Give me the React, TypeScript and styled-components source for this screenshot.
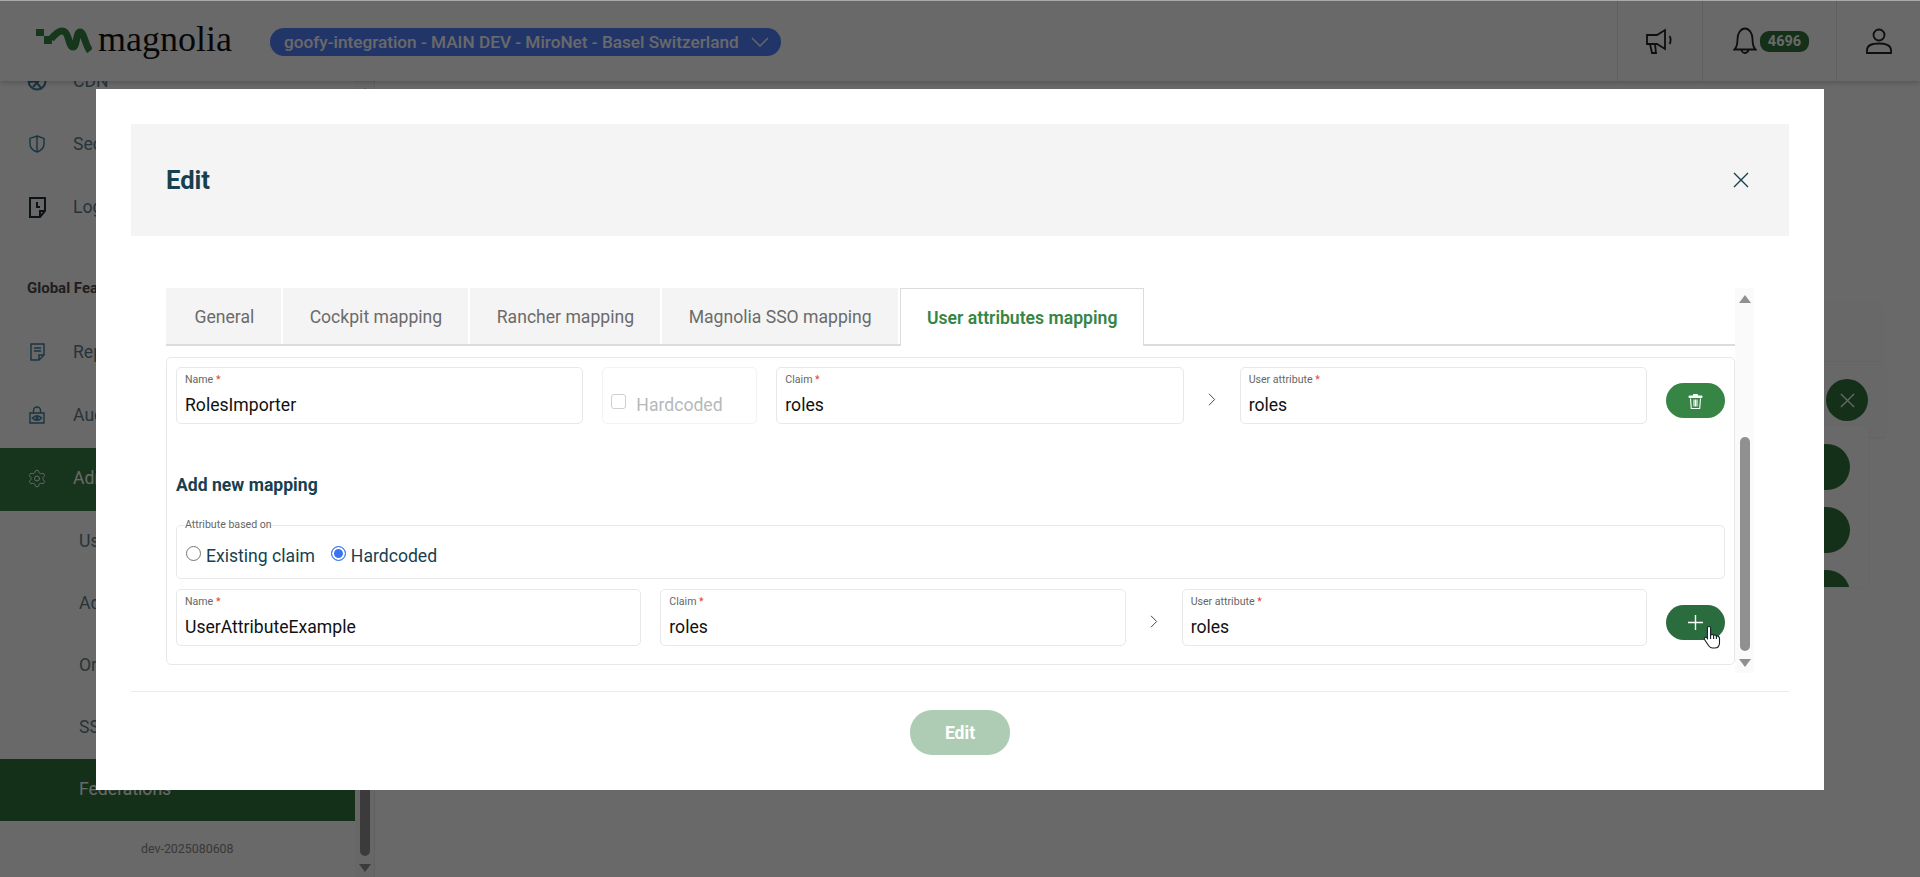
import React from 'react';
import styled, { createGlobalStyle } from 'styled-components';
import { Settings } from 'lucide-react';

const GlobalStyle = createGlobalStyle`
  html, body {
    margin: 0;
    height: 100%;
    overflow: hidden;
    background: #fff;
    font-family: Roboto, "Liberation Sans", sans-serif;
  }
  * {
    box-sizing: border-box;
  }
`;

const green = '#378545';
const backGreen = '#32763d';
const ink = '#173f4f';

// page behind the dialog
const Page = styled.div`
  height: 100vh;
  display: flex;
  flex-direction: column;
`;

const TopBar = styled.header`
  flex: 0 0 81px;
  display: flex;
  align-items: stretch;
  background: #fff;
  border-top: 1px solid #aaa;
  box-shadow: 0 2px 5px rgba(0, 0, 0, 0.18);
  position: relative;
  z-index: 2;
`;

const Logo = styled.div`
  display: flex;
  align-items: center;
  margin-left: 36px;
  gap: 6px;
  width: 197px;
`;

const LogoWord = styled.span`
  font-family: "Liberation Serif", serif;
  font-size: 36px;
  line-height: 36px;
  color: #111;
  margin-top: -5px;
`;

const ClusterPill = styled.div`
  align-self: center;
  height: 28px;
  margin-left: 37px;
  margin-top: 2px;
  padding: 0 12px 0 14px;
  width: 511px;
  display: flex;
  align-items: center;
  justify-content: space-between;
  border-radius: 14px;
  background: #5381ff;
  color: #fff;
  font-size: 17.2px;
  font-weight: 500;
  white-space: nowrap;
`;

const Spacer = styled.div`
  flex: 1;
`;

const HeaderCell = styled.div<{ $width: number }>`
  width: ${(p) => p.$width}px;
  display: flex;
  align-items: center;
  justify-content: center;
  gap: 3px;
  border-left: 1px solid #e6e6e6;
`;

const CountBadge = styled.span`
  width: 49px;
  height: 21px;
  margin-right: -3px;
  border-radius: 9px;
  background: ${backGreen};
  color: #fff;
  font-size: 14.5px;
  font-weight: 700;
  display: flex;
  align-items: center;
  justify-content: center;
`;

const Workspace = styled.div`
  flex: 1;
  min-height: 0;
  display: flex;
`;

const Sidebar = styled.aside`
  width: 375px;
  display: flex;
  border-right: 1px solid #ececec;
  background: #fff;
`;

const NavList = styled.nav`
  width: 355px;
  display: flex;
  flex-direction: column;
  justify-content: flex-end;
  overflow: hidden;
`;

const NavRow = styled.div<{ $active?: boolean; $sub?: boolean }>`
  flex: 0 0 ${(p) => (p.$sub ? 62 : 63)}px;
  display: flex;
  align-items: center;
  gap: ${(p) => (p.$sub ? 0 : 26)}px;
  padding-left: ${(p) => (p.$sub ? 79 : 27)}px;
  padding-bottom: 3px;
  font-size: 17.6px;
  white-space: nowrap;
  color: ${(p) => (p.$active ? '#fff' : '#5d7f8c')};
  background: ${(p) => (p.$active ? (p.$sub ? backGreen : '#397f45') : 'transparent')};
`;

const NavHeading = styled.div`
  flex: 0 0 82px;
  padding: 39px 0 0 27px;
  font-size: 15px;
  line-height: 18px;
  font-weight: 700;
  color: #4e4a4a;
  white-space: nowrap;
`;

const VersionTag = styled.div`
  flex: 0 0 56px;
  padding: 19px 0 0 141px;
  font-size: 12.4px;
  line-height: 18px;
  color: #8a8a8a;
`;

const IconSvg = styled.svg<{ $stroke?: number }>`
  flex: none;
  fill: none;
  stroke: currentColor;
  stroke-width: ${(p) => p.$stroke ?? 1.4};
`;

const NavIcon = styled.span<{ $tone?: string }>`
  width: 20px;
  height: 20px;
  flex: none;
  display: flex;
  align-items: center;
  justify-content: center;
  color: ${(p) => p.$tone || '#3c7f9a'};
`;

const ScrollRail = styled.div`
  flex: 0 0 19px;
  display: flex;
  flex-direction: column;
  align-items: center;
  padding-top: 7px;
  background: #fafafa;
`;

const RailArrow = styled.span<{ $down?: boolean }>`
  width: 0;
  height: 0;
  border-left: 6px solid transparent;
  border-right: 6px solid transparent;
  ${(p) => (p.$down ? 'border-top' : 'border-bottom')}: 8px solid #909090;
`;

const RailThumb = styled.span<{ $offset: number; $size: number }>`
  width: 10px;
  height: ${(p) => p.$size}px;
  margin: ${(p) => p.$offset}px 0 8px;
  border-radius: 5px;
  background: #909090;
`;

const Main = styled.main`
  flex: 1;
  min-width: 0;
  padding: 222px 38px 0 0;
  display: flex;
  flex-direction: column;
`;

const BackCard = styled.div<{ $height: number; $wide?: boolean }>`
  height: ${(p) => p.$height}px;
  margin-right: ${(p) => (p.$wide ? -3 : 0)}px;
  margin-top: ${(p) => (p.$wide ? 3 : 0)}px;
  background: #fdfdfd;
  border-bottom: 1px solid #f2f2f2;
  box-shadow: 0 0 3px rgba(0, 0, 0, 0.05);
  position: relative;
`;

const BackClose = styled.span`
  position: absolute;
  top: 14px;
  right: 17px;
  width: 42px;
  height: 42px;
  border-radius: 50%;
  background: ${backGreen};
  color: #fff;
  display: flex;
  align-items: center;
  justify-content: center;
`;

const BackList = styled.div`
  height: 161px;
  margin: -12px 14px 0 0;
  padding: 18px 18px 0 0;
  display: flex;
  flex-direction: column;
  align-items: flex-end;
  gap: 17px;
  overflow: hidden;
  background: #fff;
  box-shadow: 0 0 3px rgba(0, 0, 0, 0.05);
  position: relative;
`;

const BackAction = styled.span`
  flex: none;
  width: 80px;
  height: 46px;
  border-radius: 23px;
  background: ${backGreen};
`;

// dialog
const Overlay = styled.div`
  position: fixed;
  inset: 1px 0 0 0;
  z-index: 10;
  background: rgba(0, 0, 0, 0.59);
  display: flex;
  justify-content: center;
  padding-top: 88px;
`;

const Dialog = styled.section`
  width: 1728px;
  height: 701px;
  padding: 35px;
  background: #fff;
  display: flex;
  flex-direction: column;
`;

const DialogHeader = styled.div`
  flex: 0 0 112px;
  display: flex;
  align-items: center;
  justify-content: space-between;
  padding: 0 40px 0 35px;
  background: #f4f4f4;
  color: ${ink};
`;

const DialogTitle = styled.h2`
  margin: 0;
  font-size: 25.6px;
  font-weight: 700;
`;

const DialogBody = styled.div`
  margin-top: 52px;
  padding: 0 35px;
  height: 385px;
  display: flex;
`;

const BodyColumn = styled.div`
  flex: 1;
  min-width: 0;
`;

const TabBar = styled.div`
  height: 58px;
  display: flex;
  gap: 2px;
  border-bottom: 2px solid #dcdcdc;
`;

const Tab = styled.div`
  height: 56px;
  padding: 2px 25.8px 0 26.8px;
  display: flex;
  align-items: center;
  font-size: 17.6px;
  color: #6b6b6b;
  background: #f4f4f4;
  white-space: nowrap;

  &:first-child {
    padding: 2px 26.5px 0 28.5px;
  }
`;

const ActiveTab = styled(Tab)`
  height: 58px;
  padding: 0 25.5px 0 26.5px;
  font-weight: 600;
  color: ${green};
  background: #fff;
  border: 1px solid #dcdcdc;
  border-bottom: none;
`;

const MappingPanel = styled.div`
  height: 308px;
  margin-top: 11px;
  padding: 9px;
  border: 1px solid #e8e8e8;
  border-radius: 5px;
`;

const FieldRow = styled.div`
  display: flex;
  gap: 19px;
`;

const Field = styled.div`
  flex: 1 1 0;
  min-width: 0;
  height: 57px;
  padding: 5px 8px 0;
  border: 1px solid #e8e8e8;
  border-radius: 5px;
`;

const FieldLabel = styled.div`
  font-size: 10.6px;
  line-height: 14px;
  color: #666;
`;

const Required = styled.span`
  color: #e0452a;
`;

const FieldValue = styled.div`
  margin-top: 7px;
  font-size: 17.6px;
  line-height: 22px;
  color: #111;
`;

const CheckCell = styled.div`
  flex: 0 0 155px;
  height: 57px;
  padding: 26px 8px 0;
  display: flex;
  gap: 10px;
  border: 1px solid #f3f3f3;
  border-radius: 5px;
  font-size: 17.6px;
  line-height: 22px;
  color: #b4b9bb;
`;

const CheckBox = styled.span`
  width: 15px;
  height: 15px;
  border: 1px solid #cfcfcf;
  border-radius: 3px;
`;

const ArrowCell = styled.div`
  flex: 0 0 18px;
  padding-top: 8px;
  display: flex;
  align-items: center;
  justify-content: center;
  color: ${ink};
`;

const ActionButton = styled.button<{ $hover?: boolean }>`
  flex: 0 0 59px;
  height: 35px;
  align-self: flex-end;
  margin-bottom: 6px;
  padding: 0;
  border: none;
  border-radius: 18px;
  background: ${(p) => (p.$hover ? '#2b6c3f' : green)};
  color: #fff;
  display: flex;
  align-items: center;
  justify-content: center;
  position: relative;
`;

const HandCursor = styled.svg`
  position: absolute;
  left: 37px;
  top: 20px;
`;

const SectionTitle = styled.h3`
  margin: 51px 0 21px;
  font-size: 17.6px;
  line-height: 21px;
  font-weight: 700;
  color: ${ink};
`;

const BasedOn = styled.fieldset`
  margin: 0 0 10px;
  height: 62px;
  padding: 0 9px;
  border: 1px solid #e8e8e8;
  border-radius: 5px;
  display: flex;
  align-items: flex-start;
`;

const BasedOnLegend = styled.legend`
  margin-left: -1px;
  padding: 0;
  font-size: 10.6px;
  line-height: 16px;
  color: #666;
`;

const RadioOption = styled.label`
  display: flex;
  gap: 5px;
  margin: 12px 16px 0 0;
  font-size: 17.6px;
  line-height: 22px;
  color: ${ink};
`;

const RadioMark = styled.span<{ $on?: boolean }>`
  width: 15px;
  height: 15px;
  margin-top: 1px;
  border-radius: 50%;
  border: 1px solid ${(p) => (p.$on ? '#3b74f0' : '#767676')};
  background: ${(p) => (p.$on ? '#3b74f0' : '#fff')};
  box-shadow: ${(p) => (p.$on ? 'inset 0 0 0 2px #fff' : 'none')};
`;

const DialogFooter = styled.div`
  margin-top: 18px;
  padding-top: 18px;
  border-top: 1px solid #ececec;
  display: flex;
  justify-content: center;
`;

const SubmitButton = styled.button`
  width: 100px;
  height: 45px;
  border: none;
  border-radius: 22px;
  background: #aeccb3;
  color: #fff;
  font-family: inherit;
  font-size: 17.6px;
  font-weight: 700;
`;

const tabs = ['General', 'Cockpit mapping', 'Rancher mapping', 'Magnolia SSO mapping'];

const TextField: React.FC<{ label: string; value: string }> = ({ label, value }) => (
  <Field>
    <FieldLabel>
      {label} <Required>*</Required>
    </FieldLabel>
    <FieldValue>{value}</FieldValue>
  </Field>
);

const Chevron = () => (
  <IconSvg width="8" height="13" viewBox="0 0 8 13" $stroke={0.9}>
    <path d="M1 .8l5.6 5.7L1 12.2" />
  </IconSvg>
);

const CloseIcon: React.FC<{ size: number }> = ({ size }) => (
  <IconSvg width={size} height={size} viewBox="0 0 16 16">
    <path d="M1 1l14 14M15 1L1 15" />
  </IconSvg>
);

const LogoMark = () => (
  <svg width="56" height="28" viewBox="0 0 56 28">
    <rect x="0" y="2" width="8" height="7" fill={green} />
    <rect x="8" y="9" width="8" height="8" fill={green} />
    <path
      d="M15 12C20 6 25 2 29 5c4 3 4 15 8 15s3-15 7-15c4 0 5 13 10 19"
      fill="none"
      stroke={green}
      strokeWidth="7"
    />
  </svg>
);

const navTop = [
  {
    label: 'CDN',
    icon: (
      <IconSvg width="20" height="20" viewBox="0 0 20 20" $stroke={2}>
        <circle cx="10" cy="10" r="8.5" />
        <path d="M3 4l12 14M17 4L6 16M2 11l8-1" />
      </IconSvg>
    ),
  },
  {
    label: 'Security',
    icon: (
      <IconSvg width="16" height="18" viewBox="0 0 16 18">
        <path d="M8 1l7 2.4V9c0 3.6-3 6.6-7 8-4-1.4-7-4.4-7-8V3.4zM8 1v16" />
      </IconSvg>
    ),
  },
];

const LogsIcon = () => (
  <IconSvg width="17" height="21" viewBox="0 0 17 21" $stroke={2} color="#1c2f38">
    <path d="M1 1h15v13l-5 6H1zM16 14h-5v6M8 5v5h3" />
  </IconSvg>
);

const ReportsIcon = () => (
  <IconSvg width="15" height="18" viewBox="0 0 15 18">
    <path d="M1 1h13v11l-5 5H1zM14 12H9v5M4 5h7M4 8h7" />
  </IconSvg>
);

const AuditIcon = () => (
  <IconSvg width="16" height="18" viewBox="0 0 16 18">
    <path d="M1 7h14v10H1zM4.5 7V4.5a3.5 3.5 0 017 0V7" />
    <path d="M3.5 12c2.5-3 6.5-3 9 0-2.5 3-6.5 3-9 0z" />
    <circle cx="8" cy="12" r="1" />
  </IconSvg>
);

const App: React.FC = () => (
  <>
    <GlobalStyle />
    <Page>
      <TopBar>
        <Logo>
          <LogoMark />
          <LogoWord>magnolia</LogoWord>
        </Logo>
        <ClusterPill>
          goofy-integration - MAIN DEV - MiroNet - Basel Switzerland
          <IconSvg width="18" height="10" viewBox="0 0 18 10">
            <path d="M1 1l8 8 8-8" />
          </IconSvg>
        </ClusterPill>
        <Spacer />
        <HeaderCell $width={85}>
          <IconSvg width="28" height="26" viewBox="0 0 28 26" color="#222" $stroke={1.8}>
            <path d="M1 7h10l8-5v19l-8-5H1zM4 16l2 9h4l-1-9M23.5 8c1.5 2 1.5 6 0 8" />
          </IconSvg>
        </HeaderCell>
        <HeaderCell $width={134}>
          <IconSvg width="24" height="28" viewBox="0 0 24 28" color="#222" $stroke={1.8}>
            <path d="M1.5 22.5C4 20 4.5 18 4.5 12 4.5 6 8 1.5 12 1.5S19.500 6 19.500 12c0 6 .5 8 3 10.500zM8.500 22.500a3.500 3.500 0 007 0" />
          </IconSvg>
          <CountBadge>4696</CountBadge>
        </HeaderCell>
        <HeaderCell $width={84}>
          <IconSvg width="26" height="26" viewBox="0 0 26 26" color="#222" $stroke={1.8}>
            <circle cx="13" cy="7" r="5.5" />
            <path d="M1 25v-3c0-5 6-6.500 12-6.500S25 17 25 22v3z" />
          </IconSvg>
        </HeaderCell>
      </TopBar>
      <Workspace>
        <Sidebar>
          <NavList>
            {navTop.map((item) => (
              <NavRow key={item.label}>
                <NavIcon>{item.icon}</NavIcon>
                {item.label}
              </NavRow>
            ))}
            <NavRow>
              <NavIcon>
                <LogsIcon />
              </NavIcon>
              Logs
            </NavRow>
            <NavHeading>Global Features</NavHeading>
            <NavRow>
              <NavIcon>
                <ReportsIcon />
              </NavIcon>
              Reports
            </NavRow>
            <NavRow>
              <NavIcon>
                <AuditIcon />
              </NavIcon>
              Audit
            </NavRow>
            <NavRow $active>
              <NavIcon $tone="#fff">
                <Settings size={23} strokeWidth={1.2} />
              </NavIcon>
              Administration
            </NavRow>
            <NavRow $sub>Users</NavRow>
            <NavRow $sub>Admins</NavRow>
            <NavRow $sub>Organizations</NavRow>
            <NavRow $sub>SSO</NavRow>
            <NavRow $sub $active>
              Federations
            </NavRow>
            <VersionTag>dev-2025080608</VersionTag>
          </NavList>
          <ScrollRail>
            <RailArrow />
            <RailThumb $offset={205} $size={555} />
            <RailArrow $down />
          </ScrollRail>
        </Sidebar>
        <Main>
          <BackCard $height={59} />
          <BackCard $height={73} $wide>
            <BackClose>
              <CloseIcon size={15} />
            </BackClose>
          </BackCard>
          <BackList>
            <BackAction />
            <BackAction />
            <BackAction />
          </BackList>
        </Main>
      </Workspace>
    </Page>
    <Overlay>
      <Dialog>
        <DialogHeader>
          <DialogTitle>Edit</DialogTitle>
          <CloseIcon size={16} />
        </DialogHeader>
        <DialogBody>
          <BodyColumn>
            <TabBar>
              {tabs.map((t) => (
                <Tab key={t}>{t}</Tab>
              ))}
              <ActiveTab>User attributes mapping</ActiveTab>
            </TabBar>
            <MappingPanel>
              <FieldRow>
                <TextField label="Name" value="RolesImporter" />
                <CheckCell>
                  <CheckBox />
                  Hardcoded
                </CheckCell>
                <TextField label="Claim" value="roles" />
                <ArrowCell>
                  <Chevron />
                </ArrowCell>
                <TextField label="User attribute" value="roles" />
                <ActionButton>
                  <svg width="15" height="16" viewBox="0 0 15 16" fill="none" stroke="#fff">
                    <path d="M5.500 1.500h4V3h-4z" fill="#fff" />
                    <path d="M1 3h13v1.500H1z" fill="#fff" />
                    <path d="M2.500 5.500l.8 10h8.400l.8-10M6 6.500v7M9 6.500v7M7.500 6.500v7" strokeWidth="1.100" />
                  </svg>
                </ActionButton>
              </FieldRow>
              <SectionTitle>Add new mapping</SectionTitle>
              <BasedOn>
                <BasedOnLegend>Attribute based on</BasedOnLegend>
                <RadioOption>
                  <RadioMark />
                  Existing claim
                </RadioOption>
                <RadioOption>
                  <RadioMark $on />
                  Hardcoded
                </RadioOption>
              </BasedOn>
              <FieldRow>
                <TextField label="Name" value="UserAttributeExample" />
                <TextField label="Claim" value="roles" />
                <ArrowCell>
                  <Chevron />
                </ArrowCell>
                <TextField label="User attribute" value="roles" />
                <ActionButton $hover>
                  <svg width="15" height="15" viewBox="0 0 15 15" fill="none" stroke="#fff" strokeWidth="1.400">
                    <path d="M7.500 0v15M0 7.500h15" />
                  </svg>
                  <HandCursor width="18" height="24" viewBox="0 0 18 24" fill="#fff" stroke="#14202a" strokeWidth="1.100">
                    <path d="M6 1.500c1 0 1.600.7 1.600 1.500v7c.9-.5 2.400-.5 3 .3.900-.4 2.200-.3 2.800.7 1-.2 2.600.2 3.100 2v5c0 3-2 5-5 5h-2c-2 0-3-1-4-2.500l-4-6c-.5-1 0-2 1-2.200.7-.1 1.300.2 1.900 1V3c0-.8.600-1.500 1.600-1.500z" />
                    <path d="M7.600 10v4M10.600 10.300V14M13.400 11v3" />
                  </HandCursor>
                </ActionButton>
              </FieldRow>
            </MappingPanel>
          </BodyColumn>
          <ScrollRail>
            <RailArrow />
            <RailThumb $offset={134} $size={214} />
            <RailArrow $down />
          </ScrollRail>
        </DialogBody>
        <DialogFooter>
          <SubmitButton>Edit</SubmitButton>
        </DialogFooter>
      </Dialog>
    </Overlay>
  </>
);

export default App;
